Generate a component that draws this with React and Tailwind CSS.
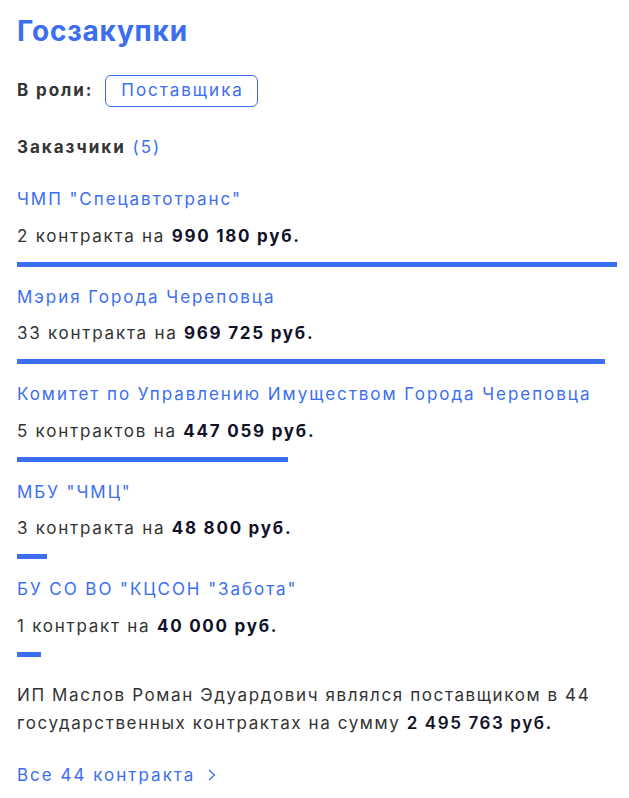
import React from "react";

const items = [
  { name: 'ЧМП "Спецавтотранс"', count: "2 контракта", sum: "990 180 руб.", value: 990180 },
  { name: "Мэрия Города Череповца", count: "33 контракта", sum: "969 725 руб.", value: 969725 },
  { name: "Комитет по Управлению Имуществом Города Череповца", count: "5 контрактов", sum: "447 059 руб.", value: 447059 },
  { name: 'МБУ "ЧМЦ"', count: "3 контракта", sum: "48 800 руб.", value: 48800 },
  { name: 'БУ СО ВО "КЦСОН "Забота"', count: "1 контракт", sum: "40 000 руб.", value: 40000 },
];

const max = 990180;

export default function App() {
  return (
    <div
      className="w-[629px] min-h-[798px] bg-white pl-[17px] pr-[12px] pt-[13.5px] text-[#333333]"
      style={{ fontFamily: "Inter, 'Noto Sans', sans-serif" }}
    >
      <h2 className="text-[28px] leading-[34px] font-bold tracking-[0.8px] text-[#3b6ef0]">Госзакупки</h2>

      <div className="mt-[27.5px] flex items-center h-[32px]">
        <span className="text-[17px] font-bold tracking-[1.9px] text-[#333333]">В роли:</span>
        <span className="ml-[12px] h-[32px] flex items-center rounded-[6px] border border-[#3b6ef0] pl-[15px] pr-[13px] text-[17px] tracking-[2px] text-[#3b6ef0]">
          Поставщика
        </span>
      </div>

      <div className="mt-[28px] text-[17px] leading-[24px] tracking-[2px]">
        <span className="font-bold">Заказчики</span>{" "}
        <span className="text-[#3b6ef0]">(5)</span>
      </div>

      <div className="mt-[28px] flex flex-col">
        {items.map((it, i) => (
          <div key={i} className={i === 0 ? "" : "mt-[18px]"}>
            <div className="text-[17px] leading-[24px] tracking-[1.95px] text-[#3b6ef0] whitespace-nowrap">{it.name}</div>
            <div className="mt-[12.5px] text-[17px] leading-[24px] tracking-[1.75px] text-[#333333]">
              {it.count} на <span className="font-bold text-[#0f1228]">{it.sum}</span>
            </div>
            <div className="mt-[14px] w-[600px]">
              <div
                className="h-[5px] bg-[#3b6ef0]"
                style={{ width: `${(it.value / max) * 100}%` }}
              />
            </div>
          </div>
        ))}
      </div>

      <p className="mt-[24px] w-[600px] text-[17px] leading-[28px] tracking-[1.6px] text-[#333333]">
        ИП Маслов Роман Эдуардович являлся поставщиком в 44 государственных контрактах на сумму{" "}
        <span className="font-semibold text-[#0f1228]">2 495 763 руб.</span>
      </p>

      <div className="mt-[26.5px] flex items-center text-[17px] leading-[24px] tracking-[2px] text-[#3b6ef0]">
        <span>Все 44 контракта</span>
        <svg className="ml-[13px]" width="8" height="12" viewBox="0 0 8 12" fill="none">
          <polyline points="1,1 6.5,6 1,11" stroke="#3b6ef0" strokeWidth="1.3" />
        </svg>
      </div>
    </div>
  );
}
